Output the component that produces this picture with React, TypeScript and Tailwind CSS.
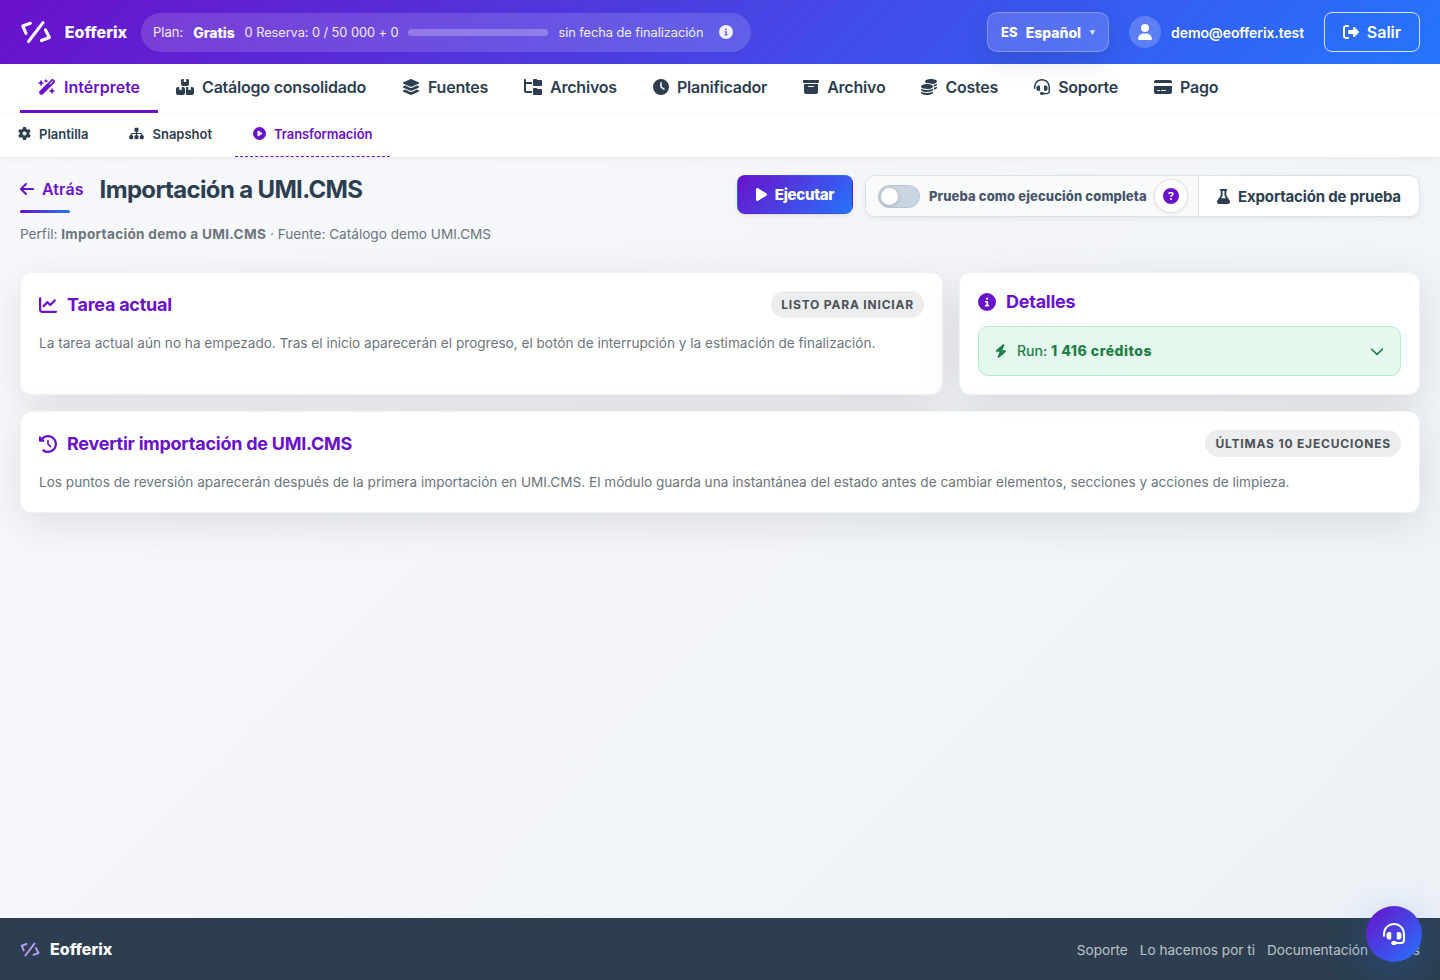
import type { ReactNode } from "react";
import type { IconType } from "react-icons";
import {
  FaArrowLeft,
  FaBolt,
  FaBoxArchive,
  FaBoxesStacked,
  FaChartLine,
  FaChevronDown,
  FaCircleInfo,
  FaCirclePlay,
  FaCircleQuestion,
  FaClock,
  FaClockRotateLeft,
  FaCoins,
  FaCreditCard,
  FaFlask,
  FaFolderTree,
  FaGear,
  FaHeadset,
  FaLayerGroup,
  FaPlay,
  FaRightFromBracket,
  FaSitemap,
  FaUser,
  FaWandMagicSparkles,
} from "react-icons/fa6";

type NavItem = { label: string; icon: IconType; size: string; active?: boolean };

const mainNav: NavItem[] = [
  { label: "Intérprete", icon: FaWandMagicSparkles, size: "h-4 w-[18px]", active: true },
  { label: "Catálogo consolidado", icon: FaBoxesStacked, size: "h-4 w-[18px]" },
  { label: "Fuentes", icon: FaLayerGroup, size: "h-4 w-[18px]" },
  { label: "Archivos", icon: FaFolderTree, size: "h-4 w-[18px]" },
  { label: "Planificador", icon: FaClock, size: "h-4 w-4" },
  { label: "Archivo", icon: FaBoxArchive, size: "h-4 w-4" },
  { label: "Costes", icon: FaCoins, size: "h-4 w-4" },
  { label: "Soporte", icon: FaHeadset, size: "h-4 w-4" },
  { label: "Pago", icon: FaCreditCard, size: "h-4 w-[18px]" },
];

const subNav: NavItem[] = [
  { label: "Plantilla", icon: FaGear, size: "h-[13px] w-[13px]" },
  { label: "Snapshot", icon: FaSitemap, size: "h-[13px] w-[15px]" },
  { label: "Transformación", icon: FaCirclePlay, size: "h-[13px] w-[13px]", active: true },
];

function Logo({ className }: { className: string }) {
  return (
    <svg
      viewBox="0 0 32 24"
      fill="none"
      stroke="currentColor"
      strokeWidth="3.1"
      strokeLinecap="round"
      strokeLinejoin="round"
      className={className}
    >
      <path d="M10.4 3.2 2.8 6 6 13.4" />
      <path d="M23.2 2.6 8.6 21.6" />
      <path d="M25.6 9.8 29.6 17.6 21.6 20.6" />
    </svg>
  );
}

function Header() {
  return (
    <header className="relative z-10 flex h-16 items-center justify-between bg-[linear-gradient(135deg,#6a11cb_0%,#2575fc_100%)] px-5 text-white">
      <div className="flex items-center">
        <a href="#" className="flex w-[107px] items-center gap-[13px] text-base font-extrabold">
          <Logo className="h-6 w-8" />
          Eofferix
        </a>
        <div className="ml-3.5 flex h-[39px] w-[610px] items-center gap-2.5 rounded-full bg-white/15 px-3 pt-px text-[12.8px] whitespace-nowrap text-white/90">
          <span className="text-[13px]">Plan:</span>
          <strong className="text-sm font-extrabold tracking-[-0.05px] text-white">Gratis</strong>
          <span className="tracking-[-0.06px]">0 Reserva: 0 / 50 000 + 0</span>
          <span className="h-[7px] w-[140px] rounded-full bg-white/25" />
          <span className="tracking-[-0.04px]">sin fecha de finalización</span>
          <FaCircleInfo className="-mt-0.5 ml-[5px] h-3.5 w-3.5" />
        </div>
      </div>

      <div className="flex items-center">
        <button className="flex h-10 w-[122px] items-center rounded-[10px] border border-white/25 bg-white/15 px-[13px] pt-px text-sm font-extrabold shadow-[0_10px_24px_rgba(0,0,0,0.1)]">
          <span className="text-[13px]">ES</span>
          <span className="ml-2">Español</span>
          <span className="ml-auto text-[9px] text-white/80">▾</span>
        </button>
        <span className="ml-5 flex h-8 w-8 items-center justify-center rounded-full bg-white/20">
          <FaUser className="h-4 w-3.5" />
        </span>
        <span className="mt-px ml-2.5 text-sm font-semibold tracking-[-0.1px]">
          demo@eofferix.test
        </span>
        <button className="ml-5 flex h-10 w-24 items-center justify-center gap-2 rounded-lg border border-white/80 text-base font-semibold">
          <FaRightFromBracket className="h-4 w-4" />
          Salir
        </button>
      </div>
    </header>
  );
}

function Navigation() {
  return (
    <div className="h-[93px] bg-white shadow-[0_2px_4px_rgba(0,0,0,0.05)]">
      <nav className="flex h-[49px] border-b border-[#fafafa] px-5">
        {mainNav.map(({ label, icon: Icon, size, active }) => (
          <a
            key={label}
            href="#"
            className={`-mb-px flex items-center gap-2 border-b-3 px-[18px] text-base font-semibold ${
              active
                ? "border-[#6a11cb] text-[#6a11cb]"
                : "border-transparent tracking-[-0.22px] text-[#2c3e50]"
            }`}
          >
            <Icon className={size} />
            {label}
          </a>
        ))}
      </nav>
      <nav className="flex h-11 gap-[5px]">
        {subNav.map(({ label, icon: Icon, size, active }) => (
          <a
            key={label}
            href="#"
            className={`flex items-center gap-2 border-b px-[18px] text-[13px] font-semibold ${
              active
                ? "border-dashed border-[#6a11cb] tracking-[-0.08px] text-[#6a11cb]"
                : "border-transparent text-[#2c3e50]"
            }`}
          >
            <Icon className={`-mt-0.5 ${size}`} />
            {label}
          </a>
        ))}
      </nav>
    </div>
  );
}

function PageHeading() {
  return (
    <div className="flex justify-between">
      <div>
        <div className="flex h-[29px] items-center">
          <a
            href="#"
            className="-mt-0.5 flex items-center gap-2 text-base font-semibold tracking-[0.1px] text-[#6a11cb]"
          >
            <FaArrowLeft className="h-4 w-3.5" />
            Atrás
          </a>
          <h1 className="ml-4 text-2xl font-bold tracking-[-0.66px] text-[#2c3e50]">
            Importación a UMI.CMS
          </h1>
        </div>
        <div className="mt-[6px] h-[3px] w-[50px] rounded-full bg-[linear-gradient(90deg,#6a11cb,#2575fc)]" />
        <p className="mt-[11px] text-[13.6px] leading-5 text-[#6c757d]">
          Perfil:{" "}
          <strong className="font-bold tracking-[0.29px]">Importación demo a UMI.CMS</strong> ·
          Fuente: Catálogo demo UMI.CMS
        </p>
      </div>

      <div className="flex items-start gap-3">
        <button className="flex h-[39px] w-[116px] items-center justify-center gap-2 rounded-lg border border-transparent bg-[linear-gradient(135deg,#6a11cb_0%,#2575fc_100%)] pt-px text-[15px] font-extrabold tracking-[-0.3px] text-white shadow-[0_2px_4px_rgba(0,0,0,0.08)]">
          <FaPlay className="-mt-px h-[15px] w-[11px]" />
          Ejecutar
        </button>
        <div className="flex h-[42px] w-[555px] overflow-hidden rounded-[10px] border border-[#dce1e8] bg-white shadow-[0_2px_5px_rgba(0,0,0,0.06)]">
          <div className="flex flex-1 items-center border-r border-[#dce1e8] bg-[#f9fafc] pl-3 text-[13px] font-extrabold text-[#475569]">
            <span className="flex h-[23px] w-[42px] items-center rounded-full border border-[#b8c5d6] bg-[#cbd5e1] px-0.5">
              <span className="h-[17px] w-[17px] rounded-full bg-white shadow-[0_1px_4px_rgba(0,0,0,0.2)]" />
            </span>
            <span className="mt-px ml-2 w-[218px] pl-px tracking-[0.13px] whitespace-nowrap">
              Prueba como ejecución completa
            </span>
            <span className="ml-2 flex h-[34px] w-[34px] items-center justify-center rounded-full border border-[#dfe3ea] bg-white shadow-[0_1px_4px_rgba(0,0,0,0.08)]">
              <FaCircleQuestion className="h-4 w-4 text-[#6a11cb]" />
            </span>
          </div>
          <button className="flex w-[220px] items-center justify-center gap-2 pt-0.5 text-[15px] font-bold tracking-[-0.16px] text-[#2c3e50]">
            <FaFlask className="-mt-px h-[15px] w-[13px]" />
            Exportación de prueba
          </button>
        </div>
      </div>
    </div>
  );
}

function Card({ className, children }: { className: string; children: ReactNode }) {
  return (
    <section
      className={`rounded-xl border border-black/5 bg-white/95 px-[18px] shadow-[0_10px_40px_rgba(0,0,0,0.1)] ${className}`}
    >
      {children}
    </section>
  );
}

function CardTitle({ icon: Icon, children }: { icon: IconType; children: ReactNode }) {
  return (
    <h2 className="flex items-center gap-2.5 text-lg leading-[27px] font-bold tracking-[-0.25px] text-[#6a11cb]">
      <Icon className="h-[18px] w-[18px]" />
      {children}
    </h2>
  );
}

function Badge({ children }: { children: ReactNode }) {
  return (
    <span className="flex h-[27px] items-center rounded-full bg-[#ecedef] px-2.5 text-xs font-bold tracking-[0.068em] text-[#495057] uppercase">
      {children}
    </span>
  );
}

function Footer() {
  return (
    <footer className="flex h-[62px] items-center justify-between bg-[#2c3e50] px-5 text-white">
      <div className="flex items-center gap-2.5 text-base font-extrabold">
        <Logo className="h-[15px] w-5 text-[#b79cf5]" />
        Eofferix
      </div>
      <div className="flex gap-3 pt-0.5 text-[13.6px] text-white/70">
        <a href="#">Soporte</a>
        <a href="#">Lo hacemos por ti</a>
        <a href="#">Documentación</a>
        <a href="#">Pagos</a>
      </div>
    </footer>
  );
}

export default function App() {
  return (
    <div className="flex h-[980px] flex-col overflow-hidden bg-[linear-gradient(135deg,#f8f9fc_0%,#edf1f6_100%)] font-['Inter',sans-serif] antialiased">
      <Header />
      <Navigation />

      <main className="flex-1 px-5 pt-[18px]">
        <PageHeading />

        <div className="mt-7 grid grid-cols-[923px_461px] gap-4">
          <Card className="h-[123px] pt-[18px]">
            <div className="flex items-center justify-between">
              <CardTitle icon={FaChartLine}>Tarea actual</CardTitle>
              <Badge>Listo para iniciar</Badge>
            </div>
            <p className="mt-[15px] text-[13.6px] leading-5 text-[#6c757d]">
              La tarea actual aún no ha empezado. Tras el inicio aparecerán el progreso, el botón de
              interrupción y la estimación de finalización.
            </p>
          </Card>

          <Card className="h-[123px] pt-[15px]">
            <CardTitle icon={FaCircleInfo}>Detalles</CardTitle>
            <button className="mt-[11px] flex h-[50px] w-full items-center rounded-[10px] border border-[#b3edcb] bg-[#e5f8ed] px-4 text-sm font-medium text-[#1e7e45]">
              <FaBolt className="h-3.5 w-3" />
              <span className="ml-2.5">
                Run:{" "}
                <strong className="font-extrabold tracking-[0.52px]">1 416 créditos</strong>
              </span>
              <FaChevronDown className="ml-auto h-3.5 w-3.5" />
            </button>
          </Card>

          <Card className="col-span-2 h-[102px] pt-[18px]">
            <div className="flex items-center justify-between">
              <CardTitle icon={FaClockRotateLeft}>Revertir importación de UMI.CMS</CardTitle>
              <Badge>Últimas 10 ejecuciones</Badge>
            </div>
            <p className="mt-[15px] text-[13.6px] leading-5 text-[#6c757d]">
              Los puntos de reversión aparecerán después de la primera importación en UMI.CMS. El
              módulo guarda una instantánea del estado antes de cambiar elementos, secciones y
              acciones de limpieza.
            </p>
          </Card>
        </div>
      </main>

      <Footer />

      <button className="fixed right-[18px] bottom-[18px] flex h-14 w-14 items-center justify-center rounded-full bg-[linear-gradient(135deg,#6a11cb_0%,#2575fc_100%)] text-white shadow-[0_8px_40px_rgba(37,117,252,0.28)]">
        <FaHeadset className="h-[22px] w-[22px]" />
      </button>
    </div>
  );
}
